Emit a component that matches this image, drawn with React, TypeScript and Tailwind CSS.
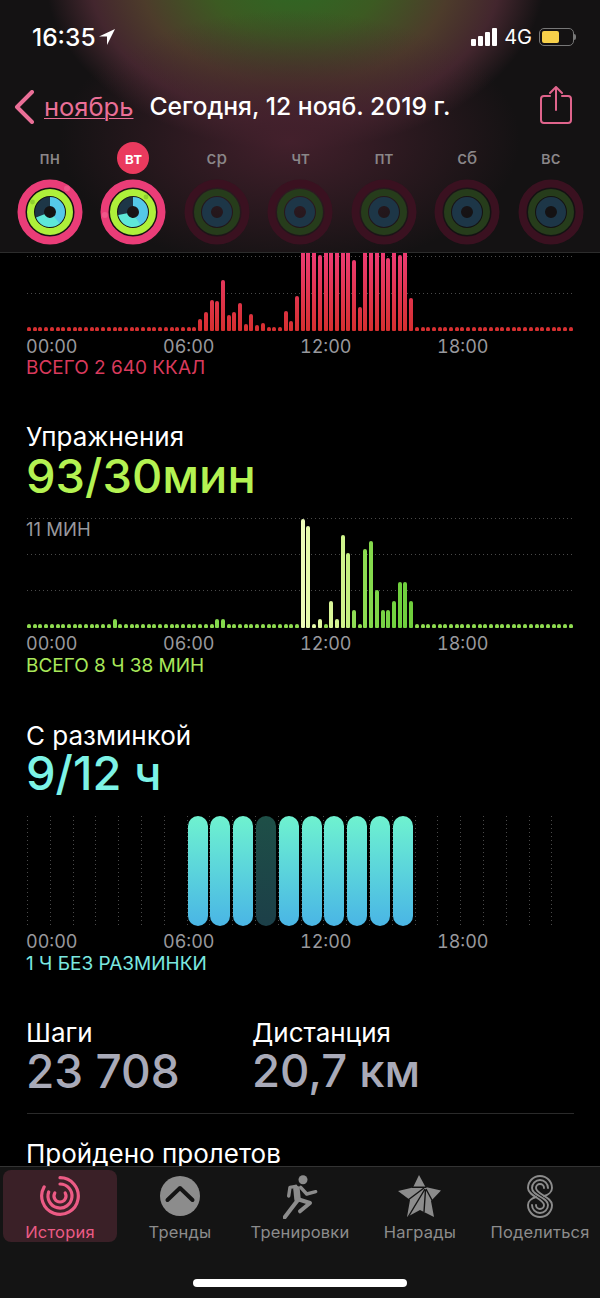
import { ReactNode } from "react";

const font = { fontFamily: "Inter, 'Noto Sans', sans-serif" };

/* ---------------- CHART DATA ---------------- */
const redBars: Record<number, number> = {
  30: 12, 31: 19, 32: 31, 33: 30, 34: 51, 35: 16, 36: 19, 37: 28, 38: 7, 39: 17, 40: 6, 41: 8,
  45: 20, 46: 10, 47: 35, 48: 90, 49: 90, 50: 90, 51: 76, 52: 90, 53: 90, 54: 90, 55: 90, 56: 90,
  57: 71, 58: 24, 59: 90, 60: 90, 61: 90, 62: 90, 63: 73, 64: 90, 65: 76, 66: 90, 67: 33,
};

const greenBars: Record<number, [number, string]> = {
  15: [9, "#84d94c"],
  33: [9, "#84d94c"],
  34: [9, "#84d94c"],
  48: [109, "#ecfcb8"],
  49: [102, "#e6fbac"],
  50: [4, "#e6fbac"],
  51: [9, "#dff8a0"],
  53: [27, "#d8f698"],
  54: [9, "#d4f590"],
  55: [93, "#cff48c"],
  56: [75, "#c4f080"],
  57: [18, "#8fdd55"],
  59: [79, "#8cdc50"],
  60: [87, "#84d94c"],
  61: [38, "#7ed648"],
  62: [18, "#78d444"],
  63: [18, "#78d444"],
  64: [27, "#72d240"],
  65: [46, "#70d03e"],
  66: [46, "#70d03e"],
  67: [27, "#6fce3c"],
};

const slots = Array.from({ length: 96 }, (_, i) => i);
const hours = Array.from({ length: 24 }, (_, i) => i);
const days = ["пн", "вт", "ср", "чт", "пт", "сб", "вс"];

/* ---------------- RINGS ---------------- */
function Arc({ r, color, width, pct, start = 0 }: { r: number; color: string; width: number; pct: number; start?: number }) {
  const c = 2 * Math.PI * r;
  return (
    <circle
      cx="33"
      cy="33"
      r={r}
      fill="none"
      stroke={color}
      strokeWidth={width}
      strokeDasharray={`${c * pct} ${c}`}
      transform={`rotate(${start - 90} 33 33)`}
    />
  );
}

function Rings({ kind }: { kind: "mon" | "tue" | "off" }) {
  if (kind === "off") {
    return (
      <svg width="66" height="66" viewBox="0 0 66 66">
        <circle cx="33" cy="33" r="28.500" fill="none" stroke="#3a1120" strokeWidth="8" />
        <circle cx="33" cy="33" r="19.500" fill="none" stroke="#263c1b" strokeWidth="7" />
        <circle cx="33" cy="33" r="10.500" fill="none" stroke="#1d3647" strokeWidth="9" />
      </svg>
    );
  }
  return (
    <svg width="66" height="66" viewBox="0 0 66 66">
      <circle cx="33" cy="33" r="28.500" fill="none" stroke="#ea3d78" strokeWidth="8" />
      {kind === "mon" ? (
        <circle cx="50" cy="9.500" r="3" fill="#f0568a" />
      ) : (
        <circle cx="4.800" cy="36" r="3" fill="#f0568a" />
      )}
      <circle cx="33" cy="33" r="19.500" fill="none" stroke="#aef03a" strokeWidth="7" />
      <circle cx={kind === "mon" ? 15.500 : 46} cy={kind === "mon" ? 23 : 18} r="2.400" fill="#8fd030" />
      <circle cx="33" cy="33" r="10.500" fill="none" stroke="#1d3647" strokeWidth="9" />
      <Arc r={10.5} color="#55c8e8" width={9} pct={kind === "mon" ? 0.4 : 0.42} />
      <Arc r={10.5} color="#5ee8d8" width={9} pct={0.3} start={kind === "mon" ? 140 : 150} />
    </svg>
  );
}

/* ---------------- TAB ICONS ---------------- */
function HistoryIcon() {
  return (
    <svg width="40" height="40" viewBox="0 0 40 40" fill="none" stroke="#ec5b85" strokeWidth="3.200" strokeLinecap="round">
      <path d="M20 1.700A18.300 18.300 0 1 1 4.150 10.850" />
      <path d="M20 8A12 12 0 1 1 8.720 15.900" />
      <path d="M25.200 17A6 6 0 1 1 14.800 17" />
    </svg>
  );
}

function TrendsIcon() {
  return (
    <svg width="40" height="40" viewBox="0 0 40 40">
      <circle cx="20" cy="20" r="20" fill="#8c8c8c" />
      <path d="M7.500 24 20 12l12.500 12" fill="none" stroke="#141414" strokeWidth="4" strokeLinecap="round" strokeLinejoin="round" />
    </svg>
  );
}

function RunnerIcon() {
  return (
    <svg width="35" height="45" viewBox="0 0 35 45" fill="none" stroke="#8c8c8c" strokeLinecap="round" strokeLinejoin="round">
      <circle cx="20" cy="5.700" r="4.500" fill="#8c8c8c" stroke="none" />
      <path d="M13.500 15 14.500 25" strokeWidth="6.500" />
      <path d="M12.700 12.300 7 13.300 5.700 22" strokeWidth="3.400" />
      <path d="M17.700 13.300 23.700 20 32.700 17.700" strokeWidth="3.400" />
      <path d="M14.300 26.700 9.300 33.300 1.700 43.300" strokeWidth="4" />
      <path d="M14.300 25 27 29 17 37.300" strokeWidth="4" />
    </svg>
  );
}

function AwardsIcon() {
  return (
    <svg width="44" height="43" viewBox="0 0 44 43">
      <path d="M21 0 27.500 12 43 15.500 33 26 36 42 22 35 9 42 12 25 0 16 15 12.500z" fill="#8c8c8c" />
      <path d="M14 12.300H28.500M26 13 10 25M27 14 9.500 43M27.500 15 26 37M28 14 35 27" fill="none" stroke="#141414" strokeWidth="1.400" />
    </svg>
  );
}

function ShareIcon() {
  return (
    <svg width="28" height="43" viewBox="-1 -1 28 43" fill="none" stroke="#8c8c8c" strokeWidth="1.900" strokeLinecap="round">
      <path d="M17 20C21 19 25 16 25 12A12 12 0 0 0 1 12C1 20 17 23 17 29A4 4 0 0 1 9 29" />
      <path d="M21 12A8 8 0 0 0 5 12C5 20 21 21 21 29A8 8 0 0 1 5 29" />
      <path d="M17 12A4 4 0 0 0 9 12C9 18 25 21 25 29A12 12 0 0 1 1 29C1 25 5 22 9 21" />
    </svg>
  );
}

/* ---------------- SMALL PARTS ---------------- */
function DottedLine({ top }: { top: number }) {
  return (
    <div
      className="absolute left-0 right-0 h-px bg-[repeating-linear-gradient(to_right,#4a4a4a_0_1px,transparent_1px_4px)]"
      style={{ top }}
    />
  );
}

function TimeAxis() {
  return (
    <div className="flex h-[22px] items-center text-[18px] tabular-nums text-[#98989d] ml-[-1px]">
      {["00:00", "06:00", "12:00", "18:00"].map((t) => (
        <span key={t} className="w-[137px]">
          {t}
        </span>
      ))}
    </div>
  );
}

function Tab({ label, icon, active }: { label: string; icon: ReactNode; active?: boolean }) {
  return (
    <div className="w-[120px] px-[3px]">
      <div
        className={`h-[72px] flex flex-col items-center rounded-lg ${
          active ? "bg-[#3a2027] text-[#ec5b85]" : "text-[#8c8c8c]"
        }`}
      >
        <div className="h-[53px] flex items-center">{icon}</div>
        <span className="text-[16.500px] leading-[20px] tracking-[0.2px] whitespace-nowrap">{label}</span>
      </div>
    </div>
  );
}

/* ---------------- APP ---------------- */
export default function App() {
  return (
    <div className="w-[600px] h-[1298px] bg-black text-white flex flex-col overflow-hidden" style={font}>
      {/* HEADER */}
      <header className="relative h-[253px] shrink-0 overflow-hidden bg-[#141213] border-b border-[#2c2c2c]">
        <div className="absolute inset-0 bg-[radial-gradient(ellipse_250px_175px_at_295px_-25px,#2c6a24_0%,#3c5a22_35%,#4d3c2b_62%,#43262e_82%,transparent_100%)]" />
        <div className="absolute inset-0 bg-[radial-gradient(ellipse_230px_130px_at_290px_140px,#43202c_0%,transparent_100%)]" />
        <div className="relative">
          <div className="flex items-center justify-between h-[36px] mt-[19px] pl-[32px] pr-[24px]">
            <div className="flex items-center gap-[3px] text-[24.500px] font-medium">
              16:35
              <svg width="16" height="16" viewBox="0 0 16 16" fill="white">
                <path d="M16 0 0 7.500h8V16z" />
              </svg>
            </div>
            <div className="flex items-center gap-[7px]">
              <div className="flex items-end gap-[2px] h-[18px]">
                <div className="w-[5px] h-[7px] bg-white rounded-[1px]" />
                <div className="w-[5px] h-[10px] bg-white rounded-[1px]" />
                <div className="w-[5px] h-[14px] bg-white rounded-[1px]" />
                <div className="w-[5px] h-[18px] bg-white rounded-[1px]" />
              </div>
              <span className="text-[20px]">4G</span>
              <div className="flex items-center">
                <div className="w-[35px] h-[18px] rounded-[5px] border border-[#777] p-[2px]">
                  <div className="w-[17px] h-full bg-[#f7d04a] rounded-[2px]" />
                </div>
                <div className="w-[2px] h-[6px] bg-[#777] rounded-r-sm" />
              </div>
            </div>
          </div>

          <div className="flex items-center h-[50px] mt-[27px] pl-[14px] pr-[28px]">
            <svg width="20" height="34" viewBox="0 0 20 34" fill="none" stroke="#ea6f97" strokeWidth="4" strokeLinecap="round" strokeLinejoin="round">
              <path d="M18 2 3 17l15 15" />
            </svg>
            <span className="ml-[10px] text-[25.500px] text-[#ea6f97] underline underline-offset-2 decoration-1">ноябрь</span>
            <span className="ml-[16px] text-[24.700px] font-medium whitespace-nowrap">Сегодня, 12 нояб. 2019 г.</span>
            <svg className="ml-auto mb-[4px]" width="32" height="38" viewBox="0 0 32 38" fill="none" stroke="#e0648c" strokeWidth="2" strokeLinecap="round" strokeLinejoin="round">
              <path d="M10 10H4a3 3 0 0 0-3 3v21a3 3 0 0 0 3 3h24a3 3 0 0 0 3-3V13a3 3 0 0 0-3-3h-6" />
              <path d="M16 24V1M10 7l6-6 6 6" />
            </svg>
          </div>

          <div className="flex pl-[8px] mt-[10px]">
            {days.map((d, i) => (
              <div key={d} className="w-[83.500px] flex flex-col items-center">
                <div
                  className={`h-[32px] w-[32px] rounded-full flex items-center justify-center font-medium ${
                    i === 1 ? "text-[16px] bg-[#ea3a5e] text-white font-semibold" : "text-[17px] pt-[2px] text-[#8a8688]"
                  }`}
                >
                  {d}
                </div>
                <div className="mt-[5px]">
                  <Rings kind={i === 0 ? "mon" : i === 1 ? "tue" : "off"} />
                </div>
              </div>
            ))}
          </div>
        </div>
      </header>

      {/* CONTENT */}
      <main className="flex-1 min-h-0 overflow-hidden pl-[27px] pr-[26px]">
        {/* Move */}
        <div className="relative h-[78px] flex items-end overflow-hidden justify-between">
          <DottedLine top={40} />
          <DottedLine top={3} />
          {slots.map((i) => {
            const h = redBars[i] ?? 4;
            return (
              <div
                key={i}
                className="relative w-[4px] rounded-t-[2px] rounded-b-[1px]"
                style={{
                  height: h,
                  backgroundImage: "linear-gradient(to top, #d62f2f 0px, #ec3b72 78px)",
                  backgroundSize: "100% 78px",
                  backgroundPosition: "bottom",
                }}
              />
            );
          })}
        </div>
        <div className="mt-[4px]">
          <TimeAxis />
        </div>
        <div className="text-[19px] leading-[22px] text-[#d93a5c] ml-[-1px]">ВСЕГО 2 640 ККАЛ</div>

        {/* Exercise */}
        <div className="mt-[43px] text-[26px] leading-[30px] ml-[-1px]">Упражнения</div>
        <div className="text-[47px] leading-[48px] font-medium text-[#b4f252] ml-[-1px]">93/30мин</div>
        <div className="relative h-[112px] mt-[16px] flex items-end justify-between">
          <DottedLine top={2} />
          <DottedLine top={38} />
          <DottedLine top={74} />
          <span className="absolute left-[-1px] top-[2px] text-[18.500px] leading-[22px] text-[#98989d]">11 МИН</span>
          {slots.map((i) => {
            const bar = greenBars[i];
            return (
              <div
                key={i}
                className="relative w-[4px] rounded-t-[2px] rounded-b-[1px]"
                style={{ height: bar ? bar[0] : 4, backgroundColor: bar ? bar[1] : "#8fdc50" }}
              />
            );
          })}
        </div>
        <div className="mt-[4px]">
          <TimeAxis />
        </div>
        <div className="mt-[1px] text-[19px] leading-[22px] text-[#a9e85a] ml-[-1px]">ВСЕГО 8 Ч 38 МИН</div>

        {/* Stand */}
        <div className="mt-[44px] text-[26px] leading-[30px] ml-[-1px]">С разминкой</div>
        <div className="text-[47px] leading-[44px] font-medium text-[#7df3e6] ml-[-1px]">9/12 ч</div>
        <div className="grid grid-cols-[repeat(24,22.800px)] h-[110px] mt-[21px] w-[548px]">
          {hours.map((h) => (
            <div
              key={h}
              className="bg-[repeating-linear-gradient(to_bottom,#4a4a4a_0_1px,transparent_1px_4px)] bg-no-repeat bg-[length:1px_100%]"
            >
              {h >= 7 && h <= 16 && (
                <div
                  className={`w-[20px] h-full ml-px rounded-[10px] ${
                    h === 10
                      ? "bg-gradient-to-b from-[#1e4f47] to-[#1c3f48]"
                      : "bg-gradient-to-b from-[#6ff2cf] to-[#4ab5e5]"
                  }`}
                />
              )}
            </div>
          ))}
        </div>
        <div className="mt-[4px]">
          <TimeAxis />
        </div>
        <div className="mt-[1px] text-[19px] leading-[22px] text-[#7be8e0] ml-[-1px]">1 Ч БЕЗ РАЗМИНКИ</div>

        {/* Steps + distance */}
        <div className="flex mt-[43px] ml-[-1px]">
          <div className="w-[226px]">
            <div className="text-[26px] leading-[30px]">Шаги</div>
            <div className="text-[46px] leading-[46px] font-medium text-[#a9aab8]">23 708</div>
          </div>
          <div>
            <div className="text-[26px] leading-[30px]">Дистанция</div>
            <div className="text-[45.500px] leading-[46px] font-medium text-[#a9aab8]">20,7 км</div>
          </div>
        </div>
        <div className="mt-[19px] border-t border-[#2a2a2a]" />
        <div className="mt-[25px] text-[26px] leading-[30px] ml-[-1px] whitespace-nowrap">Пройдено пролетов</div>
      </main>

      {/* TAB BAR */}
      <nav className="relative h-[132px] shrink-0 bg-[#141414] border-t border-[#333] pt-[3px]">
        <div className="flex">
          <Tab label="История" icon={<HistoryIcon />} active />
          <Tab label="Тренды" icon={<TrendsIcon />} />
          <Tab label="Тренировки" icon={<RunnerIcon />} />
          <Tab label="Награды" icon={<AwardsIcon />} />
          <Tab label="Поделиться" icon={<ShareIcon />} />
        </div>
        <div className="absolute left-[193px] top-[112px] w-[214px] h-[8px] rounded-full bg-white" />
      </nav>
    </div>
  );
}
